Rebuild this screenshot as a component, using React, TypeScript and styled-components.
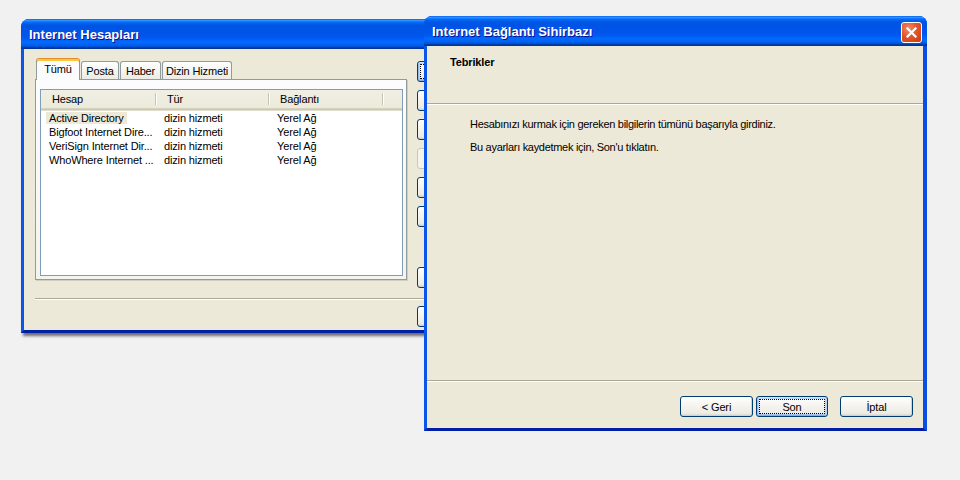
import styled, { createGlobalStyle, css } from "styled-components";

const GlobalStyle = createGlobalStyle`
  html, body {
    margin: 0;
    padding: 0;
  }
  body {
    background: #f1f1f1;
    font-family: "Liberation Sans", Arial, sans-serif;
    font-size: 11px;
    letter-spacing: -0.15px;
    color: #000;
  }
`;

const Desktop = styled.div`
  position: relative;
  width: 960px;
  height: 480px;
  overflow: hidden;
  background: #f1f1f1;
`;

// windows sit on a free desktop canvas, so they keep their own coordinates
const Frame = styled.div<{ $x: number; $y: number; $w: number; $h: number; $shadow?: boolean }>`
  position: absolute;
  left: ${(p) => p.$x}px;
  top: ${(p) => p.$y}px;
  width: ${(p) => p.$w}px;
  height: ${(p) => p.$h}px;
  box-sizing: border-box;
  display: flex;
  flex-direction: column;
  border-radius: 8px 8px 0 0;
  border-left: 3px solid #0b55e9;
  border-right: 4px solid #0a4ee4;
  border-bottom: 3px solid #001ea6;
  background: #0a4ee4;
  ${(p) => p.$shadow && css`box-shadow: 2px 3px 3px rgba(0, 0, 0, 0.55);`}
`;

const TitleBar = styled.div`
  height: 30px;
  flex: none;
  margin: 0 -4px 0 -3px;
  padding: 0 5px 0 8px;
  display: flex;
  align-items: center;
  justify-content: space-between;
  border-radius: 8px 8px 0 0;
  background: linear-gradient(
    180deg,
    #0058ee 0%,
    #3593ff 4%,
    #288eff 6%,
    #127dff 8%,
    #036ffc 10%,
    #0262ee 14%,
    #0057e5 20%,
    #0054e3 24%,
    #0055eb 56%,
    #005bf5 66%,
    #026afe 76%,
    #0062ef 86%,
    #0052d6 92%,
    #0040ab 94%,
    #003092 100%
  );
`;

const Title = styled.span`
  color: #fff;
  font-family: "Liberation Sans", Arial, sans-serif;
  font-weight: bold;
  font-size: 13px;
  letter-spacing: 0;
  text-shadow: 1px 1px 0 #0f1089;
`;

const CloseButton = styled.div`
  width: 21px;
  height: 21px;
  box-sizing: border-box;
  border: 1px solid #fff;
  border-radius: 3px;
  background: radial-gradient(circle at 35% 30%, #f08d6c 0%, #e3562c 45%, #c8380e 100%);
  display: flex;
  align-items: center;
  justify-content: center;
  margin-top: 2px;
`;

const Body = styled.div`
  flex: 1;
  background: #ece9d8;
  display: flex;
  flex-direction: column;
`;

/* ---------- XP button ---------- */

const Button = styled.button<{ $focus?: boolean; $off?: boolean; $w?: number }>`
  position: relative;
  box-sizing: border-box;
  width: ${(p) => p.$w ?? 73}px;
  height: 21px;
  padding: 0;
  font-family: "Liberation Sans", Arial, sans-serif;
  font-size: 11px;
  letter-spacing: -0.15px;
  color: #000;
  border: 1px solid #003c74;
  border-radius: 3px;
  background: linear-gradient(180deg, #ffffff 0%, #f6f5f0 40%, #ecebe6 86%, #d6d0c5 100%);
  box-shadow: inset -1px -1px 0 #d8d2bd;
  ${(p) =>
    p.$focus &&
    css`
      box-shadow: inset 0 1px 0 #cee7ff, inset 1px 0 0 #98b8ea, inset -1px 0 0 #bcd4f6,
        inset 0 -1px 0 #89ade4, inset 0 2px 0 #bcd4f6, inset 2px 0 0 #bcd4f6,
        inset -2px 0 0 #bcd4f6, inset 0 -2px 0 #a9c5ee;
      &::after {
        content: "";
        position: absolute;
        inset: 2px;
        border: 1px dotted #000;
        border-radius: 1px;
      }
    `}
  ${(p) =>
    p.$off &&
    css`
      color: #aca899;
      border-color: #c9c7ba;
      background: #f5f4ea;
      box-shadow: none;
    `}
`;

/* ---------- window 1: accounts ---------- */

const AccountsBody = styled(Body)`
  padding: 9px 0 0 11px;
`;

const MainRow = styled.div`
  display: flex;
  gap: 10px;
`;

const TabArea = styled.div`
  width: 372px;
  display: flex;
  flex-direction: column;
`;

const TabStrip = styled.div`
  height: 21px;
  display: flex;
  align-items: flex-end;
  gap: 1px;
  padding-left: 1px;
  position: relative;
  z-index: 1;
`;

const Tab = styled.div<{ $active?: boolean; $w: number }>`
  box-sizing: border-box;
  width: ${(p) => p.$w}px;
  height: 18px;
  display: flex;
  align-items: center;
  justify-content: center;
  border: 1px solid #919b9c;
  border-bottom: none;
  border-radius: 3px 3px 0 0;
  background: linear-gradient(180deg, #ffffff 0%, #f3f3ef 60%, #ecebe6 100%);
  padding-top: 1px;
  ${(p) =>
    p.$active &&
    css`
      height: 22px;
      margin-bottom: -1px;
      border-top: 1px solid #e68b2c;
      box-shadow: inset 0 2px 0 #ffc73c;
      background: #fcfcfe;
      align-items: flex-start;
      padding-top: 4px;
    `}
`;

const TabPanel = styled.div`
  box-sizing: border-box;
  height: 201px;
  border: 1px solid #919b9c;
  box-shadow: 1px 1px 0 #d0cebf;
  background: linear-gradient(180deg, #fcfcfe 0%, #f4f3ee 100%);
  padding: 9px 3px 3px 4px;
  display: flex;
`;

const ListView = styled.div`
  flex: 1;
  border: 1px solid #7f9db9;
  background: #fff;
`;

const HeaderRow = styled.div`
  display: flex;
  height: 18px;
  background: linear-gradient(180deg, #f0efe3 0%, #ebeadb 100%);
  border-bottom: 1px solid #d6d2c2;
  box-shadow: 0 1px 0 #cbc7b8, 0 2px 0 #e2decd;
`;

const HeaderCell = styled.div<{ $w?: number }>`
  box-sizing: border-box;
  ${(p) => (p.$w ? `width: ${p.$w}px;` : "flex: 1;")}
  padding-left: 11px;
  display: flex;
  align-items: center;
  position: relative;
  &::after {
    content: "";
    position: absolute;
    right: 0;
    top: 3px;
    bottom: 3px;
    width: 1px;
    background: #c7c5b2;
    box-shadow: 1px 0 0 #fff;
  }
  &:last-child::after {
    display: none;
  }
`;

const Rows = styled.div`
  padding-top: 2px;
`;

const Row = styled.div`
  display: flex;
  height: 14px;
  line-height: 14px;
`;

const Cell = styled.div<{ $w: number }>`
  width: ${(p) => p.$w}px;
  padding-left: 8px;
  box-sizing: border-box;
  white-space: nowrap;
  overflow: hidden;
`;

const FirstCell = styled(Cell)`
  padding-left: 5px;
`;

const CellText = styled.span<{ $selected?: boolean }>`
  padding: 0 3px;
  ${(p) => p.$selected && css`background: #ece9d8;`}
`;

const SideButtons = styled.div`
  display: flex;
  flex-direction: column;
  gap: 8px;
  padding-top: 3px;
`;

const Spacer = styled.div`
  height: 24px;
`;

const Separator = styled.div`
  height: 1px;
  background: #aca899;
  border-bottom: 1px solid #fff;
`;

const AccountsSeparator = styled(Separator)`
  margin-top: 10px;
`;

const AccountsFooter = styled.div`
  padding: 6px 0 0 382px;
`;

/* ---------- window 2: wizard ---------- */

const WizardHeader = styled.div`
  height: 57px;
  box-sizing: border-box;
  padding: 9px 0 0 23px;
  font-weight: bold;
  line-height: 14px;
  flex: none;
`;

const WizardContent = styled.div`
  flex: 1;
  padding: 12px 0 0 43px;
  display: flex;
  flex-direction: column;
  gap: 9px;
  line-height: 14px;
  letter-spacing: -0.3px;
`;

const WizardFooter = styled.div`
  display: flex;
  justify-content: flex-end;
  align-items: flex-start;
  padding: 14px 10px 0 0;
  height: 46px;
  box-sizing: border-box;
  flex: none;
`;

const NavGroup = styled.div`
  display: flex;
  gap: 3px;
  margin-right: 12px;
`;

const accounts = [
  { name: "Active Directory", type: "dizin hizmeti", conn: "Yerel Ağ" },
  { name: "Bigfoot Internet Dire...", type: "dizin hizmeti", conn: "Yerel Ağ" },
  { name: "VeriSign Internet Dir...", type: "dizin hizmeti", conn: "Yerel Ağ" },
  { name: "WhoWhere Internet ...", type: "dizin hizmeti", conn: "Yerel Ağ" },
];

const tabs = [
  { label: "Tümü", w: 44, active: true },
  { label: "Posta", w: 38 },
  { label: "Haber", w: 41 },
  { label: "Dizin Hizmeti", w: 70 },
];

// side buttons of the accounts window are hidden behind the wizard,
// so their labels only go to screen readers
const sideButtons = [
  { label: "Ekle", focus: true },
  { label: "Kaldır" },
  { label: "Özellikler" },
  { label: "Varsayılan Olarak Ayarla", off: true },
  { label: "Al" },
  { label: "Ver" },
];

const CloseIcon = () => (
  <svg width="11" height="11" viewBox="0 0 11 11">
    <path d="M1.5 1.5 L9.5 9.5 M9.5 1.5 L1.5 9.5" stroke="#fff" strokeWidth="2.2" strokeLinecap="square" />
  </svg>
);

export default function App() {
  return (
    <Desktop>
      <GlobalStyle />

      <Frame $x={21} $y={19} $w={500} $h={314} $shadow>
        <TitleBar>
          <Title>Internet Hesapları</Title>
        </TitleBar>
        <AccountsBody>
          <MainRow>
            <TabArea>
              <TabStrip>
                {tabs.map((t) => (
                  <Tab key={t.label} $w={t.w} $active={t.active}>
                    {t.label}
                  </Tab>
                ))}
              </TabStrip>
              <TabPanel>
                <ListView>
                  <HeaderRow>
                    <HeaderCell $w={115}>Hesap</HeaderCell>
                    <HeaderCell $w={113}>Tür</HeaderCell>
                    <HeaderCell $w={114}>Bağlantı</HeaderCell>
                    <HeaderCell />
                  </HeaderRow>
                  <Rows>
                    {accounts.map((a, i) => (
                      <Row key={a.name}>
                        <FirstCell $w={115}>
                          <CellText $selected={i === 0}>{a.name}</CellText>
                        </FirstCell>
                        <Cell $w={113}>{a.type}</Cell>
                        <Cell $w={114}>{a.conn}</Cell>
                      </Row>
                    ))}
                  </Rows>
                </ListView>
              </TabPanel>
            </TabArea>
            <SideButtons>
              {sideButtons.map((b) => (
                <Button key={b.label} $w={80} $focus={b.focus} $off={b.off} aria-label={b.label} />
              ))}
              <Spacer />
              <Button $w={80} aria-label="Sıra" />
            </SideButtons>
          </MainRow>
          <AccountsSeparator />
          <AccountsFooter>
            <Button $w={80} aria-label="Kapat" />
          </AccountsFooter>
        </AccountsBody>
      </Frame>

      <Frame $x={424} $y={16} $w={503} $h={415}>
        <TitleBar>
          <Title>Internet Bağlantı Sihirbazı</Title>
          <CloseButton>
            <CloseIcon />
          </CloseButton>
        </TitleBar>
        <Body>
          <WizardHeader>Tebrikler</WizardHeader>
          <Separator />
          <WizardContent>
            <div>Hesabınızı kurmak için gereken bilgilerin tümünü başarıyla girdiniz.</div>
            <div>Bu ayarları kaydetmek için, Son'u tıklatın.</div>
          </WizardContent>
          <Separator />
          <WizardFooter>
            <NavGroup>
              <Button>&lt; Geri</Button>
              <Button $w={72} $focus>Son</Button>
            </NavGroup>
            <Button>İptal</Button>
          </WizardFooter>
        </Body>
      </Frame>
    </Desktop>
  );
}
